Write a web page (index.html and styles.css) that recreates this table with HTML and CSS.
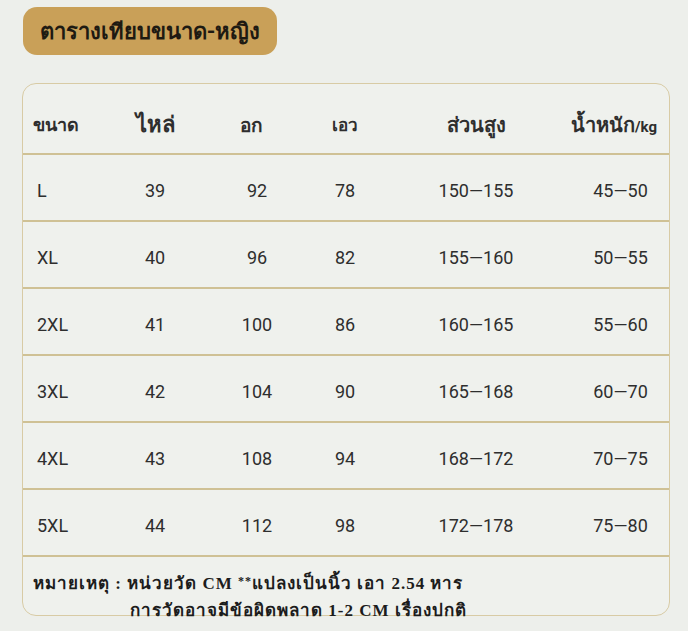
FILE: index.html
```html
<!DOCTYPE html>
<html lang="th">
<head>
<meta charset="utf-8">
<link rel="stylesheet" href="styles.css">
</head>
<body>
<div class="page">
  <div class="title">ตารางเทียบขนาด-หญิง</div>
  <div class="box">
    <div class="row head">
      <div class="c1 h-size">ขนาด</div>
      <div class="c h-shoulder">ไหล่</div>
      <div class="c h-chest">อก</div>
      <div class="c h-waist">เอว</div>
      <div class="c h-height">ส่วนสูง</div>
      <div class="c h-weight">น้ำหนัก<span class="kg">/kg</span></div>
    </div>
    <div class="row"><div class="c1">L</div><div class="c">39</div><div class="c">92</div><div class="c">78</div><div class="c">150—155</div><div class="c w">45—50</div></div>
    <div class="row"><div class="c1">XL</div><div class="c">40</div><div class="c">96</div><div class="c">82</div><div class="c">155—160</div><div class="c w">50—55</div></div>
    <div class="row"><div class="c1">2XL</div><div class="c">41</div><div class="c">100</div><div class="c">86</div><div class="c">160—165</div><div class="c w">55—60</div></div>
    <div class="row"><div class="c1">3XL</div><div class="c">42</div><div class="c">104</div><div class="c">90</div><div class="c">165—168</div><div class="c w">60—70</div></div>
    <div class="row"><div class="c1">4XL</div><div class="c">43</div><div class="c">108</div><div class="c">94</div><div class="c">168—172</div><div class="c w">70—75</div></div>
    <div class="row"><div class="c1">5XL</div><div class="c">44</div><div class="c">112</div><div class="c">98</div><div class="c">172—178</div><div class="c w">75—80</div></div>
    <div class="note">
      <div class="line1">หมายเหตุ : หน่วยวัด CM <span class="stars">**</span>แปลงเป็นนิ้ว เอา 2.54 หาร</div>
      <div class="line2">การวัดอาจมีข้อผิดพลาด 1-2 CM เรื่องปกติ</div>
    </div>
  </div>
</div>
</body>
</html>
```
FILE: styles.css
```css
html, body {
  margin: 0;
  padding: 0;
  background: #edefeb;
}
body {
  font-family: "Roboto", "Liberation Sans", "Noto Sans", sans-serif;
  color: #2e2e2e;
}
.page {
  width: 688px;
  height: 631px;
  padding-top: 7px;
  box-sizing: border-box;
}
.title {
  margin-left: 23px;
  width: 254px;
  height: 48px;
  box-sizing: border-box;
  border-radius: 14px;
  background: #c9a058;
  color: #1e1a12;
  font-weight: bold;
  font-size: 22px;
  display: flex;
  align-items: center;
  justify-content: center;
}
.box {
  margin-top: 28px;
  margin-left: 22px;
  width: 648px;
  height: 533px;
  box-sizing: border-box;
  border: 1.5px solid #d8cba5;
  border-radius: 14px;
  background: #eff1ed;
  display: flex;
  flex-direction: column;
}
.row {
  display: grid;
  grid-template-columns: 82px 100px 104px 72px 190px 97px;
  align-items: center;
  height: 67px;
  flex: none;
  padding-top: 6px;
  border-bottom: 2px solid #cfc195;
  box-sizing: border-box;
  font-size: 18px;
}
.row.head {
  height: 71px;
  padding-top: 12px;
  font-weight: bold;
}
.c1 {
  padding-left: 14px;
}
.c {
  text-align: center;
  white-space: nowrap;
}
.c.w {
  padding-left: 2px;
}
.head .c1 { padding-left: 10px; font-size: 18px; }
.h-shoulder { font-size: 22px; }
.h-chest { font-size: 19px; padding-right: 12px; }
.h-waist { font-size: 17px; }
.h-height { font-size: 20px; }
.h-weight { font-size: 20px; padding-right: 14px; }
.kg { font-size: 15px; }
.note {
  flex: 1;
  padding-top: 11px;
  padding-left: 10px;
  font-family: "Liberation Serif", "DejaVu Serif", serif;
  font-weight: bold;
  font-size: 17px;
  letter-spacing: 1px;
  color: #1c1c1c;
  line-height: 27px;
  white-space: nowrap;
}
.stars {
  font-size: 12px;
  vertical-align: 4px;
}
.line2 {
  padding-left: 97px;
}
```
